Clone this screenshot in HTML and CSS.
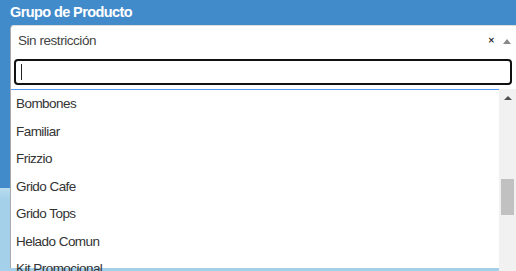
FILE: index.html
```html
<html>
    <head>
        <title>Grupo de Producto</title>
        <link rel="stylesheet" href="styles.css">
    </head>
    <body>
        <div class="panel">
            <div class="panel-title">Grupo de Producto</div>
            <div class="chosen">
                <span class="chosen-text">Sin restricción</span>
                <span class="chosen-clear">&#x2715;</span>
                <span class="chosen-arrow"></span>
            </div>
            <div class="drop">
                <div class="search">
                    <div class="search-box"><span class="caret"></span></div>
                </div>
                <div class="results">
                    <ul class="options">
                        <li>Bombones</li>
                        <li>Familiar</li>
                        <li>Frizzio</li>
                        <li>Grido Cafe</li>
                        <li>Grido Tops</li>
                        <li>Helado Comun</li>
                        <li>Kit Promocional</li>
                    </ul>
                    <div class="scrollbar">
                        <div class="sb-btn"><span class="tri-up"></span></div>
                        <div class="sb-track"><div class="sb-thumb"></div></div>
                        <div class="sb-btn"><span class="tri-down"></span></div>
                    </div>
                </div>
            </div>
        </div>
    </body>
</html>
```

FILE: styles.css
```css
body {
    margin: 0;
    width: 516px;
    height: 271px;
    overflow: hidden;
    font-family: "Liberation Sans", Arial, sans-serif;
    background: linear-gradient(#428bca 0, #428bca 188px, #b9dcef 188px, #a4d0ea 200px, #a4d0ea 100%);
}
.panel {
    position: relative;
    height: 271px;
}
.panel-title {
    height: 25px;
    line-height: 24px;
    padding-left: 10px;
    color: #fff;
    font-weight: bold;
    font-size: 14.5px;
    letter-spacing: -0.6px;
}
.chosen {
    margin-left: 10px;
    height: 28px;
    background: #fff;
    border: 1px solid #aaa;
    border-top-color: #ddd;
    border-right: none;
    border-radius: 4px 0 0 0;
    display: flex;
    align-items: center;
    color: #444;
    font-size: 13.5px;
    letter-spacing: -0.45px;
}
.chosen-text {
    flex: 1;
    padding-left: 7px;
}
.chosen-clear {
    font-size: 8px;
    font-weight: bold;
    color: #333;
    margin-right: 8px;
    margin-top: 1px;
}
.chosen-arrow {
    width: 0;
    height: 0;
    border-left: 4px solid transparent;
    border-right: 4px solid transparent;
    border-bottom: 5px solid #888;
    margin-right: 5px;
    margin-top: 2px;
}
.drop {
    position: absolute;
    left: 10px;
    right: 0;
    top: 54px;
    height: 214px;
    background: #fff;
    border-left: 1px solid #aaa;
    display: flex;
    flex-direction: column;
}
.search {
    padding: 5px 4px 4px 3px;
}
.search-box {
    height: 22px;
    border: 2px solid #111;
    border-radius: 4px;
    display: flex;
    align-items: center;
    padding-left: 5px;
}
.caret {
    width: 1px;
    height: 16px;
    background: #222;
}
.results {
    flex: 1;
    display: flex;
    border-top: 1px solid #5897fb;
    margin-right: 17px;
    position: relative;
}
.options {
    flex: 1;
    margin: 0;
    padding: 0;
    list-style: none;
    overflow: hidden;
    color: #333;
    font-size: 13.5px;
    letter-spacing: -0.55px;
}
.options li {
    height: 27.5px;
    line-height: 27px;
    padding-left: 5px;
}
.scrollbar {
    position: absolute;
    right: -17px;
    top: -1px;
    bottom: 0;
    width: 17px;
    background: #f1f1f1;
    display: flex;
    flex-direction: column;
}
.sb-btn {
    height: 17px;
    display: flex;
    align-items: center;
    justify-content: center;
}
.tri-up {
    border-left: 4px solid transparent;
    border-right: 4px solid transparent;
    border-bottom: 4px solid #505050;
}
.tri-down {
    border-left: 4px solid transparent;
    border-right: 4px solid transparent;
    border-top: 4px solid #505050;
}
.sb-track {
    flex: 1;
    padding: 0 2px;
}
.sb-thumb {
    margin-top: 73px;
    height: 36px;
    background: #c1c1c1;
}
```
